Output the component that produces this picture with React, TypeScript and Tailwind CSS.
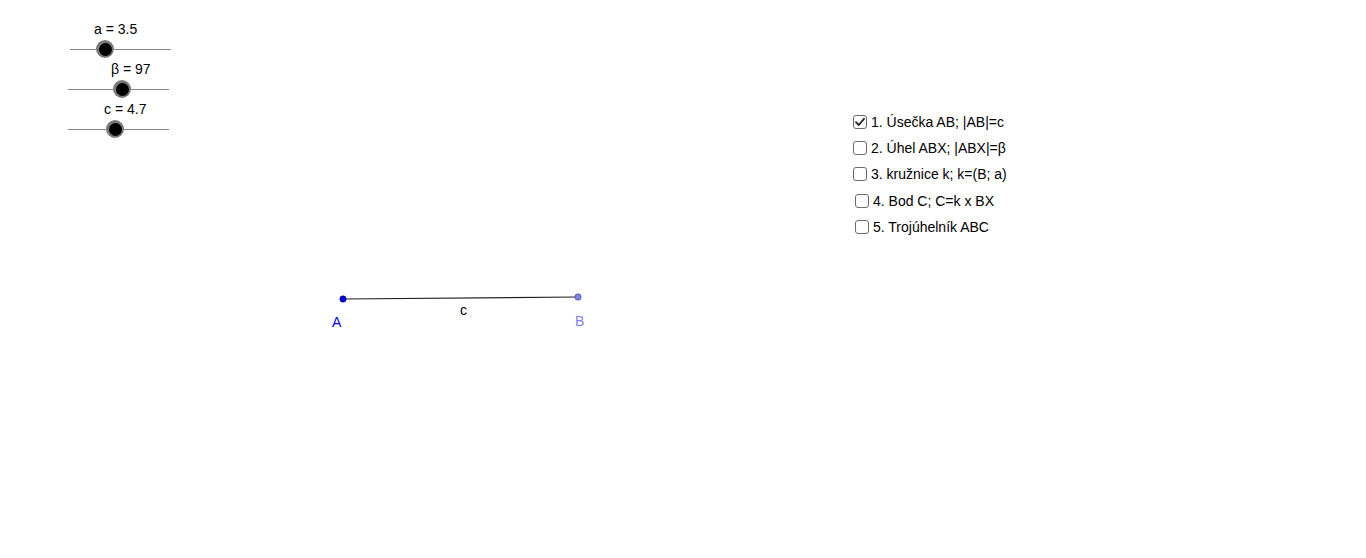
const sliders = [
  { label: 'a = 3.5', labelOffset: 26, lineOffset: 2, knobX: 37 },
  { label: 'β = 97', labelOffset: 43, lineOffset: 0, knobX: 54 },
  { label: 'c = 4.7', labelOffset: 36, lineOffset: 0, knobX: 47 },
]

const steps = [
  { text: '1. Úsečka AB; |AB|=c', checked: true, shift: false },
  { text: '2. Úhel ABX; |ABX|=β', checked: false, shift: false },
  { text: '3. kružnice k; k=(B; a)', checked: false, shift: false },
  { text: '4. Bod C; C=k x BX', checked: false, shift: true },
  { text: '5. Trojúhelník ABC', checked: false, shift: true },
]

function Slider({ label, labelOffset, lineOffset, knobX }: (typeof sliders)[number]) {
  return (
    <div className="flex flex-col">
      <div className="text-[14px] leading-[18px] text-black" style={{ paddingLeft: labelOffset }}>
        {label}
      </div>
      <div className="relative mt-[11px] h-px w-[101px] bg-[#8a8a8a]" style={{ marginLeft: lineOffset }}>
        {/* knob sits on the track */}
        <div
          className="absolute top-[-9px] w-[18px] h-[18px] rounded-full bg-[#7a7a7a] flex items-center justify-center"
          style={{ left: knobX - lineOffset - 9 }}
        >
          <div className="w-[13px] h-[13px] rounded-full bg-black" />
        </div>
      </div>
    </div>
  )
}

export default function App() {
  return (
    <div
      className="relative w-[1366px] h-[558px] bg-white overflow-hidden text-black"
      style={{ fontFamily: '"Liberation Sans", Arial, sans-serif' }}
    >
      <div className="absolute left-[68px] top-[20px] flex flex-col gap-[10px]">
        {sliders.map((s) => (
          <Slider key={s.label} {...s} />
        ))}
      </div>

      <div className="absolute left-[853px] top-[113px] flex flex-col gap-[8px]">
        {steps.map((step, i) => (
          <label
            key={step.text}
            className={`flex items-center h-[18px] text-[14px] ${step.shift ? 'ml-[2px]' : ''} ${i === 3 ? 'mt-[1px]' : ''}`}
          >
            <span className="w-[14px] h-[14px] border border-[#6b6b6b] rounded-[3px] bg-white flex items-center justify-center mr-[4px]">
              {step.checked && (
                <svg width="12" height="12" viewBox="0 0 12 12">
                  <path d="M2 6.2 L4.8 9 L10 2.8" fill="none" stroke="#222" strokeWidth="1.8" strokeLinecap="round" strokeLinejoin="round" />
                </svg>
              )}
            </span>
            <span>{step.text}</span>
          </label>
        ))}
      </div>

      <svg className="absolute left-0 top-0" width="1366" height="558">
        <line x1="343" y1="299" x2="578" y2="297" stroke="#222" strokeWidth="1.2" />
        <circle cx="343" cy="299" r="3.2" fill="#0000ff" stroke="#000" strokeWidth="0.5" />
        <circle cx="578" cy="297" r="3.2" fill="#7f7fff" stroke="#333" strokeWidth="0.5" />
      </svg>

      <div className="absolute left-[332px] top-[313px] text-[14px] leading-[18px] text-[#0000ff]">A</div>
      <div className="absolute left-[460px] top-[301px] text-[14px] leading-[18px]">c</div>
      <div className="absolute left-[575px] top-[312px] text-[14px] leading-[18px] text-[#7f7fff]">B</div>
    </div>
  )
}
